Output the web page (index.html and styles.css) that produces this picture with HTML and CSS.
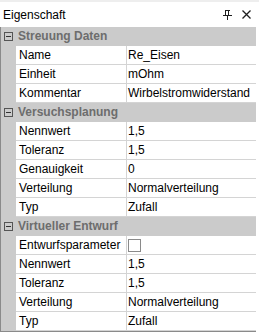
FILE: index.html
```html
<!DOCTYPE html>
<html lang="de">
<head>
    <meta charset="UTF-8">
    <title>Eigenschaft</title>
    <link rel="stylesheet" href="styles.css">
</head>
<body>
    <div class="panel">
        <div class="titlebar">
            <span class="title">Eigenschaft</span>
            <span class="tools">
                <svg width="9" height="10" viewBox="0 0 9 10">
                    <path d="M2 0.5h5M2.5 0.5v5M5.5 0.5v5M0 5.5h9M4.5 5.5v4.5" stroke="#1e1e1e" stroke-width="1" fill="none"/>
                    <rect x="5" y="1" width="1" height="4" fill="#1e1e1e"/>
                </svg>
                <svg width="9" height="9" viewBox="0 0 9 9">
                    <path d="M0.5 0.5l8 8M8.5 0.5l-8 8" stroke="#1e1e1e" stroke-width="1.3" fill="none"/>
                </svg>
            </span>
        </div>

        <div class="grid">
            <div class="cat"><span class="toggle"></span><span class="cat-name">Streuung Daten</span></div>
            <div class="row"><span class="name">Name</span><span class="value">Re_Eisen</span></div>
            <div class="row"><span class="name">Einheit</span><span class="value">mOhm</span></div>
            <div class="row"><span class="name">Kommentar</span><span class="value">Wirbelstromwiderstand</span></div>

            <div class="cat"><span class="toggle"></span><span class="cat-name">Versuchsplanung</span></div>
            <div class="row"><span class="name">Nennwert</span><span class="value">1,5</span></div>
            <div class="row"><span class="name">Toleranz</span><span class="value">1,5</span></div>
            <div class="row"><span class="name">Genauigkeit</span><span class="value">0</span></div>
            <div class="row"><span class="name">Verteilung</span><span class="value">Normalverteilung</span></div>
            <div class="row"><span class="name">Typ</span><span class="value">Zufall</span></div>

            <div class="cat"><span class="toggle"></span><span class="cat-name">Virtueller Entwurf</span></div>
            <div class="row"><span class="name">Entwurfsparameter</span><span class="value"><span class="check"></span></span></div>
            <div class="row"><span class="name">Nennwert</span><span class="value">1,5</span></div>
            <div class="row"><span class="name">Toleranz</span><span class="value">1,5</span></div>
            <div class="row"><span class="name">Verteilung</span><span class="value">Normalverteilung</span></div>
            <div class="row"><span class="name">Typ</span><span class="value">Zufall</span></div>
        </div>
    </div>
</body>
</html>
```

FILE: styles.css
```css
body {
    margin: 0;
    font-family: 'Liberation Sans', Arial, sans-serif;
    font-size: 12px;
    color: #000;
    background: #fff;
}
.panel {
    width: 259px;
    height: 333px;
    background: #fff;
    border-top: 2px solid #eeeeee;
    box-sizing: border-box;
}
.titlebar {
    height: 25px;
    display: flex;
    align-items: center;
    justify-content: space-between;
    padding: 0 8px 0 3px;
}
.tools {
    display: flex;
    align-items: center;
    gap: 10px;
}
.tools svg {
    display: block;
}
.grid {
    width: 256px;
    background: #cbcbcb;
    border-left: 1px solid #8a8a8a;
    border-bottom: 1px solid #8a8a8a;
    box-sizing: border-box;
}
.cat {
    height: 18px;
    display: flex;
    align-items: center;
    border-bottom: 1px solid #cbcbcb;
}
.toggle {
    width: 9px;
    height: 9px;
    margin: 0 5px 0 3px;
    border: 1px solid #555;
    box-sizing: border-box;
    position: relative;
    background: #cbcbcb;
}
.toggle::after {
    content: "";
    position: absolute;
    left: 1px;
    right: 1px;
    top: 3px;
    height: 1px;
    background: #333;
}
.cat-name {
    font-weight: bold;
    color: #6d6d6d;
}
.row {
    height: 18px;
    margin-left: 15px;
    display: grid;
    grid-template-columns: 111px 1fr;
    background: #fff;
    border-bottom: 1px solid #d4d4d4;
}
.name, .value {
    display: flex;
    align-items: center;
    white-space: nowrap;
    overflow: hidden;
}
.name {
    padding-left: 3px;
    border-right: 1px solid #d4d4d4;
}
.value {
    padding-left: 1px;
}
.check {
    width: 11px;
    height: 11px;
    border: 1px solid #8a8a8a;
    background: #fff;
}
```
